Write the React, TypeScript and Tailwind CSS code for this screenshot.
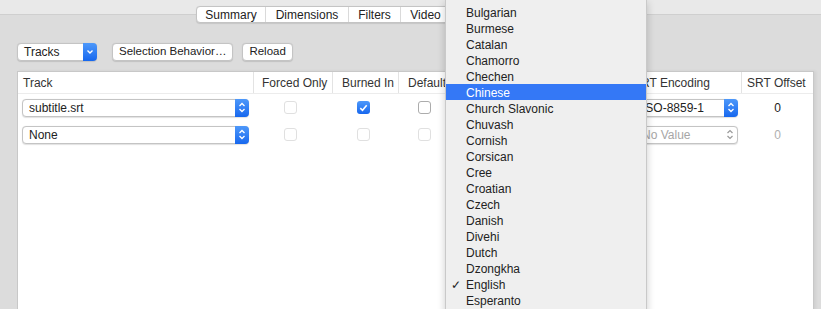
import type { ReactNode } from "react";

const languages = [
  "Bulgarian",
  "Burmese",
  "Catalan",
  "Chamorro",
  "Chechen",
  "Chinese",
  "Church Slavonic",
  "Chuvash",
  "Cornish",
  "Corsican",
  "Cree",
  "Croatian",
  "Czech",
  "Danish",
  "Divehi",
  "Dutch",
  "Dzongkha",
  "English",
  "Esperanto",
  "Estonian",
];

function Stepper({ disabled = false, single = false }: { disabled?: boolean; single?: boolean }) {
  if (disabled) {
    return (
      <span className="flex h-full w-[14px] items-center justify-center">
        <svg width="8" height="11" viewBox="0 0 8 11" fill="none" stroke="#9a9a9a" strokeWidth="1.2">
          <path d="M1.5 4 L4 1.5 L6.5 4" />
          <path d="M1.5 7 L4 9.5 L6.5 7" />
        </svg>
      </span>
    );
  }
  return (
    <span className="flex h-[calc(100%+2px)] -my-px -mr-px w-[14px] items-center justify-center rounded-r-[4px] bg-gradient-to-b from-[#4d98fa] to-[#1667ee]">
      {single ? (
        <svg width="8" height="6" viewBox="0 0 8 6" fill="none" stroke="white" strokeWidth="1.4">
          <path d="M1.5 1.5 L4 4 L6.5 1.5" />
        </svg>
      ) : (
        <svg width="8" height="11" viewBox="0 0 8 11" fill="none" stroke="white" strokeWidth="1.3">
          <path d="M1.5 4 L4 1.5 L6.5 4" />
          <path d="M1.5 7 L4 9.5 L6.5 7" />
        </svg>
      )}
    </span>
  );
}

function Popup({
  label,
  width,
  disabled = false,
  single = false,
}: {
  label: string;
  width: string;
  disabled?: boolean;
  single?: boolean;
}) {
  return (
    <div
      className={`flex h-[18px] items-center rounded-[4px] border border-[#c4c4c4] bg-white shadow-[0_0.5px_1px_rgba(0,0,0,0.12)] ${width}`}
    >
      <span className={`flex-1 truncate pl-[6px] text-[12px] ${disabled ? "text-[#a6a6a6]" : "text-[#222]"}`}>
        {label}
      </span>
      <Stepper disabled={disabled} single={single} />
    </div>
  );
}

function Button({ children }: { children: ReactNode }) {
  return (
    <div className="flex h-[18px] items-center rounded-[4px] border border-[#c4c4c4] bg-white px-[6px] text-[11.5px] text-[#222] shadow-[0_0.5px_1px_rgba(0,0,0,0.12)]">
      {children}
    </div>
  );
}

function Checkbox({ state }: { state: "on" | "off" | "disabled" }) {
  if (state === "on") {
    return (
      <span className="flex h-[13px] w-[13px] items-center justify-center rounded-[3px] bg-gradient-to-b from-[#4d98fa] to-[#1667ee]">
        <svg width="9" height="8" viewBox="0 0 9 8" fill="none" stroke="white" strokeWidth="1.6">
          <path d="M1.3 4.2 L3.5 6.3 L7.7 1.3" />
        </svg>
      </span>
    );
  }
  return (
    <span
      className={`block h-[13px] w-[13px] rounded-[3px] border bg-white ${
        state === "off" ? "border-[#acacac]" : "border-[#e0e0e0]"
      }`}
    />
  );
}

function HeaderCell({ children, width, last = false }: { children: ReactNode; width: string; last?: boolean }) {
  return (
    <div className={`flex h-full items-center truncate pl-[5px] ${width} ${last ? "" : "border-r border-[#e3e3e3]"}`}>
      {children}
    </div>
  );
}

export default function App() {
  return (
    <div
      className="relative h-[309px] w-[821px] overflow-hidden bg-[#dcdcdc]"
      style={{ fontFamily: '"Liberation Sans", Arial, sans-serif' }}
    >
      <div className="h-[15px] border-b border-[#cfcfcf] bg-[#e9e9e9]" />

      <div className="-mt-[9px] ml-[196px] flex h-[17px] w-[270px] rounded-[4px] border border-[#c4c4c4] bg-white text-[12px] text-[#222] shadow-[0_0.5px_1px_rgba(0,0,0,0.1)]">
        <div className="flex w-[69px] items-center justify-center border-r border-[#dadada]">Summary</div>
        <div className="flex w-[83px] items-center justify-center border-r border-[#dadada]">Dimensions</div>
        <div className="flex w-[52px] items-center justify-center border-r border-[#dadada]">Filters</div>
        <div className="flex w-[50px] items-center justify-center border-r border-[#dadada]">Video</div>
      </div>

      <div className="ml-[17px] mt-[20px] flex items-center">
        <Popup label="Tracks" width="w-[80px]" single />
        <div className="ml-[15px]">
          <Button>Selection Behavior…</Button>
        </div>
        <div className="ml-[9px]">
          <Button>Reload</Button>
        </div>
      </div>

      <div className="ml-[17px] mt-[10px] h-[240px] w-[797px] border-l border-t border-r border-[#c8c8c8] bg-white shadow-[2px_0_3px_rgba(0,0,0,0.06)]">
        <div className="flex h-[22px] border-b border-[#ececec] text-[12px] text-[#333]">
          <HeaderCell width="w-[236px]">Track</HeaderCell>
          <HeaderCell width="w-[79px]">
            <span className="pl-[3px]">Forced Only</span>
          </HeaderCell>
          <HeaderCell width="w-[66px]">
            <span className="pl-[4px]">Burned In</span>
          </HeaderCell>
          <HeaderCell width="w-[60px]">
            <span className="pl-[4px]">Default</span>
          </HeaderCell>
          <HeaderCell width="w-[169px]">Language</HeaderCell>
          <HeaderCell width="w-[114px]">SRT Encoding</HeaderCell>
          <HeaderCell width="w-[71px]" last>
            SRT Offset
          </HeaderCell>
        </div>

        <div className="flex h-[27px] items-center">
          <div className="w-[236px] pl-[4px]">
            <Popup label="subtitle.srt" width="w-[227px]" />
          </div>
          <div className="w-[79px] pl-[30px]">
            <Checkbox state="disabled" />
          </div>
          <div className="w-[66px] pl-[24px]">
            <Checkbox state="on" />
          </div>
          <div className="w-[60px] pl-[19px]">
            <Checkbox state="off" />
          </div>
          <div className="w-[169px] pl-[5px]">
            <Popup label="English" width="w-[155px]" />
          </div>
          <div className="w-[114px] pl-[7px]">
            <Popup label="ISO-8859-1" width="w-[103px]" />
          </div>
          <div className="w-[71px] text-center text-[12px] text-[#222]">0</div>
        </div>

        <div className="flex h-[27px] items-center">
          <div className="w-[236px] pl-[4px]">
            <Popup label="None" width="w-[227px]" />
          </div>
          <div className="w-[79px] pl-[30px]">
            <Checkbox state="disabled" />
          </div>
          <div className="w-[66px] pl-[24px]">
            <Checkbox state="disabled" />
          </div>
          <div className="w-[60px] pl-[19px]">
            <Checkbox state="disabled" />
          </div>
          <div className="w-[169px] pl-[5px]">
            <Popup label="No Value" width="w-[155px]" disabled />
          </div>
          <div className="w-[114px] pl-[7px]">
            <Popup label="No Value" width="w-[103px]" disabled />
          </div>
          <div className="w-[71px] text-center text-[12px] text-[#b0b0b0]">0</div>
        </div>
      </div>

      {/* open language menu */}
      <div className="absolute left-[445px] top-0 w-[202px] border-x border-[#c9c9c9] bg-[#efefef] pt-[4px] shadow-[0_2px_8px_rgba(0,0,0,0.2)]">
        {languages.map((lang) => (
          <div
            key={lang}
            className={`relative flex h-[16px] items-center pl-[20px] pt-px text-[12px] ${
              lang === "Chinese" ? "bg-[#3478f6] text-white" : "text-[#222]"
            }`}
          >
            {lang === "English" ? (
              <span className="absolute left-[5px] top-px text-[12px] leading-[16px]">✓</span>
            ) : null}
            {lang}
          </div>
        ))}
      </div>
    </div>
  );
}
